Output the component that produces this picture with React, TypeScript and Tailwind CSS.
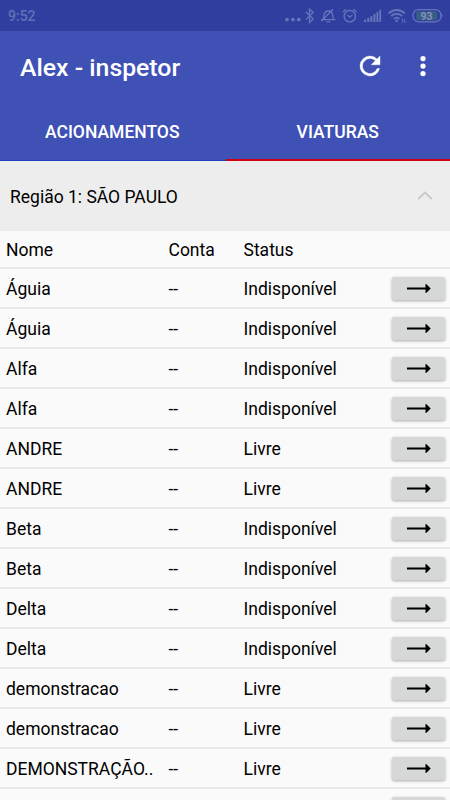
//
// Vehicle list screen ("Viaturas" tab).
//

type Vehicle = {
    name: string;
    account: string;
    status: string;
};

const VEHICLES: Vehicle[] = [
    { name: "Águia", account: "--", status: "Indisponível" },
    { name: "Águia", account: "--", status: "Indisponível" },
    { name: "Alfa", account: "--", status: "Indisponível" },
    { name: "Alfa", account: "--", status: "Indisponível" },
    { name: "ANDRE", account: "--", status: "Livre" },
    { name: "ANDRE", account: "--", status: "Livre" },
    { name: "Beta", account: "--", status: "Indisponível" },
    { name: "Beta", account: "--", status: "Indisponível" },
    { name: "Delta", account: "--", status: "Indisponível" },
    { name: "Delta", account: "--", status: "Indisponível" },
    { name: "demonstracao", account: "--", status: "Livre" },
    { name: "demonstracao", account: "--", status: "Livre" },
    { name: "DEMONSTRAÇÃO..", account: "--", status: "Livre" },
    { name: "", account: "", status: "" },
];

// System icons on the right of the status bar
function StatusIcons() {
    return (
        <svg width="170" height="31" viewBox="280 0 170 31" fill="none" stroke="#6874bb" strokeWidth="1.3">
            <g fill="#6874bb" stroke="none">
                <circle cx="287" cy="19.6" r="1.9" />
                <circle cx="293" cy="19.6" r="1.9" />
                <circle cx="298.8" cy="19.6" r="1.9" />
            </g>
            {/* bluetooth */}
            <path d="M305.8 11.8l7.4 7.2-3.7 3.4V9l3.7 3.4-7.4 7.2" />
            {/* muted bell */}
            <path d="M322.3 19.6c1.4-1.1 1.7-2.6 1.7-4.3 0-2.5 1.6-4.3 4.3-4.3s4.3 1.8 4.3 4.3c0 1.7.3 3.2 1.7 4.3zM326.4 21.9h3.8M321.3 21.3L333 9.3" />
            {/* alarm */}
            <circle cx="349.8" cy="16.2" r="5.7" />
            <path d="M347.3 15l2.4 2.2 2.8-2.2M343 12l3.2-2.8M356.6 12l-3.2-2.8" />
            {/* signal */}
            <g fill="#6874bb" stroke="none">
                <path d="M364 22v-2l2-.6V22zM367.2 22v-3.7l2-.9V22zM370.3 22v-5.3l2-1V22zM373.4 22v-7.4l2-1V22zM376.4 22v-9.5l1.9-1V22zM379.3 22V10.2l1.8-.9V22z" />
            </g>
            {/* wifi */}
            <path strokeWidth="1.8" d="M388.6 13.3c4.7-4.4 11.5-4.4 16.2 0M391.2 16.1c3.2-3 7.8-3 11 0M393.9 18.8c1.7-1.5 3.9-1.5 5.6 0" />
            <circle cx="396.7" cy="20.8" r="1.3" fill="#6874bb" stroke="none" />
            <path strokeWidth="0.9" d="M402.7 22.5v-3.7l-1 1M404.7 19v3.7l1-1" />
            {/* battery */}
            <rect x="413" y="9.6" width="28" height="12.2" rx="5.5" strokeWidth="1.2" />
            <rect x="416.2" y="11.2" width="21" height="9" rx="2.5" fill="#375f86" stroke="none" />
            <path d="M441.8 14v3.4" strokeWidth="1" />
            <text x="426.6" y="19.5" fill="#8590bf" stroke="none" fontSize="10.5" fontWeight="700" textAnchor="middle" fontFamily="Roboto, sans-serif">93</text>
        </svg>
    );
}

function ArrowButton() {
    return (
        <button
            className="flex h-[23px] w-[53px] items-center justify-center rounded-[2px] bg-[#d6d7d7] shadow-[0_1px_3px_rgba(0,0,0,0.32)]"
            aria-label="Abrir"
        >
            <svg width="25" height="11" viewBox="0 0 25 11" fill="#000">
                <path d="M1 4.4h18.5V.9l1 .3 4.2 4.2-4.2 4.4-1 .3V6.4H1z" />
            </svg>
        </button>
    );
}

function VehicleRow({ vehicle }: { vehicle: Vehicle }) {
    return (
        <div className="flex h-10 shrink-0 items-center border-b-2 border-[#eaeaea] pl-[6px] pr-[5px]">
            <span className="w-[162.5px] whitespace-nowrap pt-px">{vehicle.name}</span>
            <span className="w-[75px] pt-px">{vehicle.account}</span>
            <span className="flex-1 pt-px">{vehicle.status}</span>
            <ArrowButton />
        </div>
    );
}

export default function App() {
    return (
        <div className="flex h-[800px] w-[450px] flex-col overflow-hidden bg-[#fafafa] font-['Roboto',sans-serif] text-[17.5px] leading-5 text-black">
            {/* status bar */}
            <div className="flex h-[31px] shrink-0 items-center justify-between bg-[#303f9f] pl-2">
                <span className="pt-px text-[14px] font-medium text-[#6370b8]">9:52</span>
                <StatusIcons />
            </div>

            {/* app bar */}
            <header className="shrink-0 bg-[#3f51b5] text-white">
                <div className="flex h-[73px] items-center pl-5 pr-[12.5px]">
                    <h1 className="flex-1 pt-px text-[24.8px] font-medium leading-8">Alex - inspetor</h1>
                    <svg className="mr-[22.5px] mb-[3px]" width="30" height="30" viewBox="0 0 24 24" fill="#fff" stroke="#fff" strokeWidth="0.3">
                        <path d="M17.65 6.35A7.95 7.95 0 0 0 12 4a8 8 0 1 0 7.73 10h-2.08A6 6 0 1 1 12 6c1.66 0 3.14.69 4.22 1.78L13 11h7V4z" />
                    </svg>
                    <svg className="mb-[3px]" width="30" height="30" viewBox="0 0 24 24" fill="#fff">
                        <circle cx="12" cy="6" r="2.1" />
                        <circle cx="12" cy="12" r="2.1" />
                        <circle cx="12" cy="18" r="2.1" />
                    </svg>
                </div>
                <nav className="flex h-[57px] text-center font-medium">
                    <div className="flex-1 border-b border-[#1a3fc0] pt-[18px] pr-px">ACIONAMENTOS</div>
                    <div className="flex-1 border-b-2 border-[#cc0010] pt-[18px]">VIATURAS</div>
                </nav>
            </header>

            {/* region group */}
            <div className="flex h-[70px] shrink-0 items-center justify-between bg-[#ededed] pl-[10px] pr-[17px]">
                <span className="pt-0.5">Região 1: SÃO PAULO</span>
                <svg width="16" height="10" viewBox="0 0 16 10" fill="none" stroke="#c8c8c8" strokeWidth="1.8">
                    <path d="M1.2 8L8 1.5 14.8 8" />
                </svg>
            </div>

            {/* table */}
            <div className="flex h-[38px] shrink-0 items-center border-b-2 border-[#eaeaea] pl-[6px]">
                <span className="w-[162.5px] pt-0.5">Nome</span>
                <span className="w-[75px] pt-0.5">Conta</span>
                <span className="pt-0.5">Status</span>
            </div>
            {VEHICLES.map((vehicle, i) => (
                <VehicleRow key={i} vehicle={vehicle} />
            ))}
        </div>
    );
}
